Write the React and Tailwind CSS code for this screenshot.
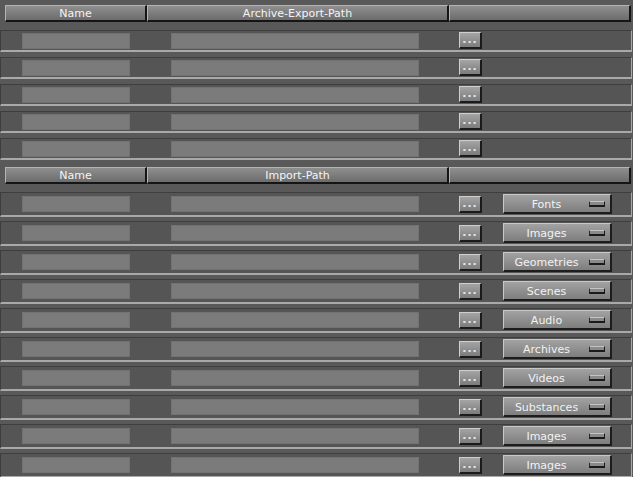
import React from 'react';

const archiveRows = [0, 1, 2, 3, 4];
const importTypes = ['Fonts', 'Images', 'Geometries', 'Scenes', 'Audio', 'Archives', 'Videos', 'Substances', 'Images', 'Images'];

const HeaderCell = ({ width, children }) => (
    <div
        className={`${width} h-[17px] flex items-center justify-center pt-[1px] border-t border-l border-t-[#b4b4b4] border-l-[#b4b4b4] border-b-2 border-r-2 border-b-[#151515] border-r-[#151515] bg-gradient-to-b from-[#8f8f8f] to-[#6c6c6c] text-[11px] leading-none text-[#f4f4f4]`}
    >
        {children}
    </div>
);

const Header = ({ title }) => (
    <div className="ml-[5px] flex">
        <HeaderCell width="w-[142px]">Name</HeaderCell>
        <HeaderCell width="w-[302px]">{title}</HeaderCell>
        <HeaderCell width="w-[182px]" />
    </div>
);

const Field = ({ width, margin }) => (
    <div className={`${width} ${margin} h-[16px] bg-[#7b7b7b] border border-[#727272]`} />
);

const DotsButton = () => (
    <div className="ml-[40px] w-[23px] h-[17px] flex items-end justify-center pb-[2px] border-t border-l border-t-[#cfcfcf] border-l-[#cfcfcf] border-b-2 border-r-2 border-b-[#1b1b1b] border-r-[#1b1b1b] bg-gradient-to-b from-[#a4a4a4] to-[#7c7c7c] text-[11px] font-bold leading-none text-[#dde9f6] tracking-[1px]">
        ...
    </div>
);

const Dropdown = ({ label }) => (
    <div className="ml-[21px] w-[109px] h-[20px] flex items-center border-t border-l border-t-[#c8c8c8] border-l-[#c8c8c8] border-b-2 border-r-2 border-b-[#1d1d1d] border-r-[#1d1d1d] bg-gradient-to-b from-[#a2a2a2] to-[#7e7e7e]">
        <span className="flex-1 pt-[2px] text-center text-[11px] leading-none text-[#f2f2f2]">{label}</span>
        <div className="mr-[5px] w-[16px] h-[6px] bg-[#8a8a8a] border-t border-l border-t-[#c4c4c4] border-l-[#2a2a2a] border-b-2 border-r border-b-[#1a1a1a] border-r-[#1a1a1a]" />
    </div>
);

const Row = ({ tall, children }) => (
    <div
        className={`w-[632px] ${tall ? 'h-[25px]' : 'h-[22px]'} flex items-center bg-[#555555] border-t border-l border-t-[#3e3e3e] border-l-[#3e3e3e] border-b-2 border-r border-b-[#a9a9a9] border-r-[#a9a9a9]`}
    >
        <Field width="w-[108px]" margin="ml-[21px]" />
        <Field width="w-[248px]" margin="ml-[41px]" />
        <DotsButton />
        {children}
    </div>
);

const App = () => {
    return (
        <div className="w-[633px] h-[477px] overflow-hidden bg-[#595959] pt-[5px] font-['DejaVu_Sans',Verdana,sans-serif]">
            <Header title="Archive-Export-Path" />

            <div className="mt-[8px] flex flex-col gap-[5px]">
                {archiveRows.map((i) => (
                    <Row key={i} />
                ))}
            </div>

            <div className="mt-[7px]">
                <Header title="Import-Path" />
            </div>

            <div className="mt-[8px] flex flex-col gap-[4px]">
                {importTypes.map((type, i) => (
                    <Row key={i} tall>
                        <Dropdown label={type} />
                    </Row>
                ))}
            </div>
        </div>
    );
};

export default App;
